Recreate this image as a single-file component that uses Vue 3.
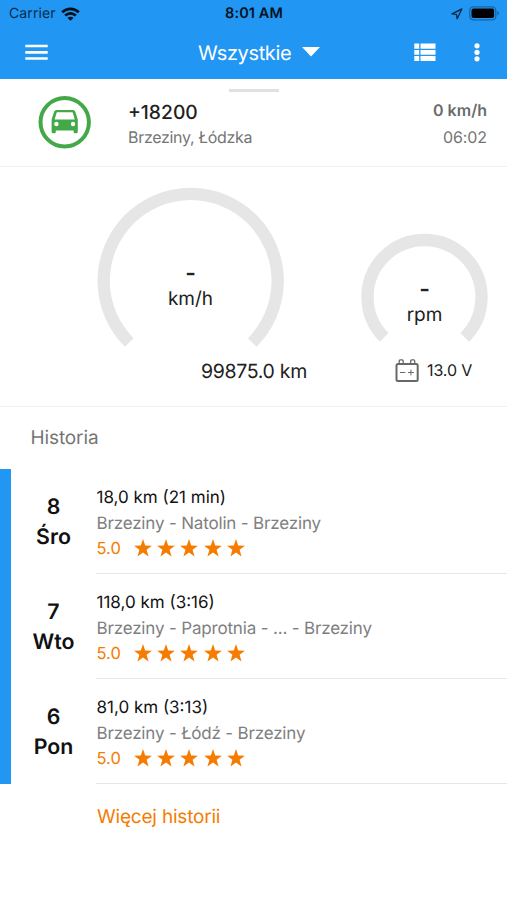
<script setup>
const trips = [
  { day: '8', name: 'Śro', summary: '18,0 km (21 min)', route: 'Brzeziny - Natolin - Brzeziny', score: '5.0' },
  { day: '7', name: 'Wto', summary: '118,0 km (3:16)', route: 'Brzeziny - Paprotnia - ... - Brzeziny', score: '5.0' },
  { day: '6', name: 'Pon', summary: '81,0 km (3:13)', route: 'Brzeziny - Łódź - Brzeziny', score: '5.0' },
]
</script>

<template>
  <div class="screen">
    <header class="top">
      <div class="status">
        <div class="status-left">
          <span class="carrier">Carrier</span>
          <svg class="wifi" width="19" height="14" viewBox="0 0 19 14">
            <g fill="none" stroke="#05111c" stroke-width="2.7">
              <path d="M1.2 5.2a11.8 11.8 0 0 1 16.6 0" />
              <path d="M4.2 8.6a7.5 7.5 0 0 1 10.6 0" />
            </g>
            <path d="M9.5 13.8L6.5 10.9a4.2 4.2 0 0 1 6 0z" fill="#05111c" />
          </svg>
        </div>
        <span class="clock">8:01 AM</span>
        <div class="status-right">
          <svg width="12" height="12" viewBox="0 0 12 12">
            <path d="M10.8 1L1 5.9l4.4.5.8 4.4z" fill="none" stroke="#0b2c48" stroke-width="1.4" stroke-linejoin="round" />
          </svg>
          <svg width="31" height="15" viewBox="0 0 31 15">
            <rect x=".8" y=".8" width="26" height="13" rx="3.6" fill="none" stroke="#1766a6" stroke-width="1.3" />
            <rect x="2.5" y="2.5" width="22.6" height="9.6" rx="2" fill="#000" />
            <path d="M28.3 5v4.6q1.7-.7 1.7-2.3t-1.7-2.3z" fill="#1766a6" />
          </svg>
        </div>
      </div>
      <nav class="bar">
        <svg class="menu" width="23" height="17" viewBox="0 0 23 17">
          <path d="M.3 2h22.4M.3 8.3h22.4M.3 14.5h22.4" stroke="#fff" stroke-width="2.7" />
        </svg>
        <div class="picker">
          <span class="title">Wszystkie</span>
          <svg width="18" height="10" viewBox="0 0 18 10"><path d="M0 0h18L9 9.4z" fill="#fff" /></svg>
        </div>
        <div class="actions">
          <svg width="22" height="19" viewBox="0 0 22 19" fill="#fff">
            <path d="M.3.5h4.9v5.2H.3zM6.5.5h15v5.2h-15zM.3 6.9h4.9v4.8H.3zM6.5 6.9h15v4.8h-15zM.3 12.9h4.9v5.2H.3zM6.5 12.9h15v5.2h-15z" />
          </svg>
          <svg width="6" height="19" viewBox="0 0 6 19" fill="#fff">
            <circle cx="3" cy="2.8" r="2.6" /><circle cx="3" cy="9.3" r="2.6" /><circle cx="3" cy="15.8" r="2.6" />
          </svg>
        </div>
      </nav>
    </header>

    <section class="vehicle">
      <i class="handle"></i>
      <svg class="car" width="54" height="54" viewBox="0 0 54 54">
        <circle cx="26.7" cy="27.2" r="24.2" fill="#fff" stroke="#43a847" stroke-width="4" />
        <path fill="#43a847" fill-rule="evenodd" d="M18.4 15h16.6q1.7 0 2.2 1.6l2.6 8v12.2q0 1.5-1.5 1.5h-1.2q-1.5 0-1.5-1.5v-1.4H17.8v1.4q0 1.5-1.5 1.5h-1.2q-1.5 0-1.5-1.5V24.6l2.6-8q.5-1.6 2.2-1.6zM18.800 17.200l-2.200 7.200h20.200L34.600 17.200zM18.400 26.800a2.200 2.200 0 1 0 0 4.400 2.200 2.200 0 0 0 0-4.400zM35 26.800a2.200 2.200 0 1 0 0 4.400 2.200 2.200 0 0 0 0-4.400z" />
      </svg>
      <div class="ident">
        <span class="plate">+18200</span>
        <span class="place">Brzeziny, Łódzka</span>
      </div>
      <div class="now">
        <span class="speed">0 km/h</span>
        <span class="time">06:02</span>
      </div>
    </section>

    <section class="gauges">
      <div class="gauge big">
        <svg width="188" height="188" viewBox="0 0 188 188">
          <path d="M32.2 155.5a87 87 0 1 1 123 0" fill="none" stroke="#e6e6e6" stroke-width="12.3" />
        </svg>
        <div class="reading"><b>-</b><span>km/h</span></div>
        <span class="odometer">99875.0 km</span>
      </div>
      <div class="gauge small">
        <svg width="128" height="128" viewBox="0 0 128 128">
          <path d="M23.2 104.3a57 57 0 1 1 80.6 0" fill="none" stroke="#e6e6e6" stroke-width="12.3" />
        </svg>
        <div class="reading"><b>-</b><span>rpm</span></div>
        <div class="battery">
          <svg width="24" height="24" viewBox="0 0 24 24" fill="none" stroke="#686868">
            <rect x="1.5" y="5" width="21.2" height="17" rx="1.5" stroke-width="2" />
            <path d="M4.2 4.200V1.900q0-1 1-1h2q1 0 1 1v2.300M15.700 4.200V1.900q0-1 1-1h2q1 0 1 1v2.300" stroke-width="1.3" />
            <path d="M5 13.500h5.400M13 13.500h5.800M15.900 10.600v5.800" stroke-width="1" />
          </svg>
          <span class="volts">13.0 V</span>
        </div>
      </div>
    </section>

    <h2 class="heading"><span>Historia</span></h2>
    <main class="history">
      <article v-for="trip in trips" :key="trip.day" class="trip">
        <div class="date"><span>{{ trip.day }}</span><span>{{ trip.name }}</span></div>
        <div class="details">
          <span class="summary">{{ trip.summary }}</span>
          <span class="route">{{ trip.route }}</span>
          <div class="rating">
            <span class="score">{{ trip.score }}</span>
            <svg v-for="n in 5" :key="n" width="18" height="18" viewBox="0 0 18 18">
              <path d="M9 0l2.2 6.6 6.7.1-5.3 4.15 1.95 6.65L9 13.5 3.45 17.5l1.95-6.65L.1 6.7l6.7-.1z" fill="#f57c00" />
            </svg>
          </div>
        </div>
      </article>
    </main>
    <a class="more"><span>Więcej historii</span></a>
  </div>
</template>

<style>
body { background: #fff; }
</style>

<style scoped>
.screen {
  width: 507px; height: 900px; overflow: hidden; background: #fff;
  font-family: Inter, "Liberation Sans", sans-serif; color: #212121;
  text-rendering: geometricPrecision;
}
span { white-space: nowrap; }
.top { height: 79px; background: #2196f3; box-sizing: border-box; }
.status { height: 27px; display: grid; grid-template-columns: 1fr auto 1fr; align-items: center; padding: 0 8px 0 9px; }
.status-left { display: flex; align-items: center; gap: 5px; }
.carrier { font-size: 14px; color: #082c4a; letter-spacing: .1px; }
.clock { font-size: 14.5px; font-weight: 600; color: #05131f; letter-spacing: .1px; }
.status-right { display: flex; align-items: center; justify-content: flex-end; gap: 6px; margin-right: -1px; }
.bar { height: 52px; display: grid; grid-template-columns: 173px 1fr 93px; align-items: center; padding: 0 0 2px 25px; box-sizing: border-box; }
.picker { display: flex; align-items: center; gap: 11px; }
.title { font-size: 20px; line-height: 26px; color: #fff; letter-spacing: -.35px; padding-top: 2px; }
.actions { display: flex; align-items: center; gap: 38px; }
.vehicle {
  position: relative; height: 88px; box-sizing: border-box; border-bottom: 1px solid #f1f1f1;
  display: grid; grid-template-columns: 90px 1fr auto; padding: 16px 20px 0 38px;
}
.handle { position: absolute; top: 10px; left: 229px; width: 50px; height: 3px; background: #e0e1e3; }
.ident, .now { display: flex; flex-direction: column; padding-top: 4px; }
.now { align-items: flex-end; }
.plate { font-size: 19.3px; line-height: 26px; font-weight: 500; }
.place, .time { font-size: 16px; line-height: 24px; color: #757575; letter-spacing: -.3px; }
.time { letter-spacing: -.1px; }
.speed { font-size: 16px; line-height: 22px; font-weight: 600; color: #6b6b6b; padding-bottom: 4px; }
.gauges { height: 240px; box-sizing: border-box; border-bottom: 1px solid #f1f1f1; display: flex; align-items: flex-start; }
.gauge { display: grid; }
.gauge > svg, .reading { grid-area: 1 / 1; }
.big { padding: 20px 0 0 97px; grid-template-rows: 171px 26px; width: 188px; }
.small { padding: 66px 0 0 76px; grid-template-rows: 124px 27px; width: 128px; }
.reading { display: flex; flex-direction: column; align-items: center; font-size: 19px; line-height: 25px; padding-top: 74px; }
.small .reading { padding-top: 44px; }
.reading { margin-right: 1px; }
.reading b { font-size: 23px; font-weight: 600; }
.odometer { justify-self: end; margin-right: -22px; font-size: 19.5px; line-height: 26px; letter-spacing: -.3px; }
.battery { display: flex; align-items: center; gap: 8.5px; padding-left: 33.5px; }
.volts { font-size: 16px; letter-spacing: -.1px; padding-bottom: 2px; }
.heading { margin: 0; height: 62px; box-sizing: border-box; padding: 18px 0 0 30.5px; font-size: 19px; line-height: 26px; font-weight: 400; color: #757575; letter-spacing: -.12px; }
.history { border-left: 11px solid #2196f3; }
.trip { height: 105px; display: grid; grid-template-columns: 85px 1fr; }
.date { display: flex; flex-direction: column; align-items: center; padding-top: 24px; font-size: 21.3px; line-height: 29.5px; font-weight: 600; color: #111; }
.details { display: flex; flex-direction: column; align-items: flex-start; padding: 16px 0 0 .5px; border-bottom: 1.5px solid #e6e6e6; }
.summary { font-size: 17px; line-height: 26px; color: #111; }
.route { font-size: 17px; line-height: 26px; color: #808080; letter-spacing: -.17px; }
.rating { display: flex; align-items: center; gap: 5.2px; height: 22px; }
.score { width: 32.4px; font-size: 16.5px; color: #f57c00; }
.more { display: block; padding: 20px 0 0 97px; font-size: 19px; line-height: 26px; color: #f57c00; letter-spacing: -.2px; }
</style>
